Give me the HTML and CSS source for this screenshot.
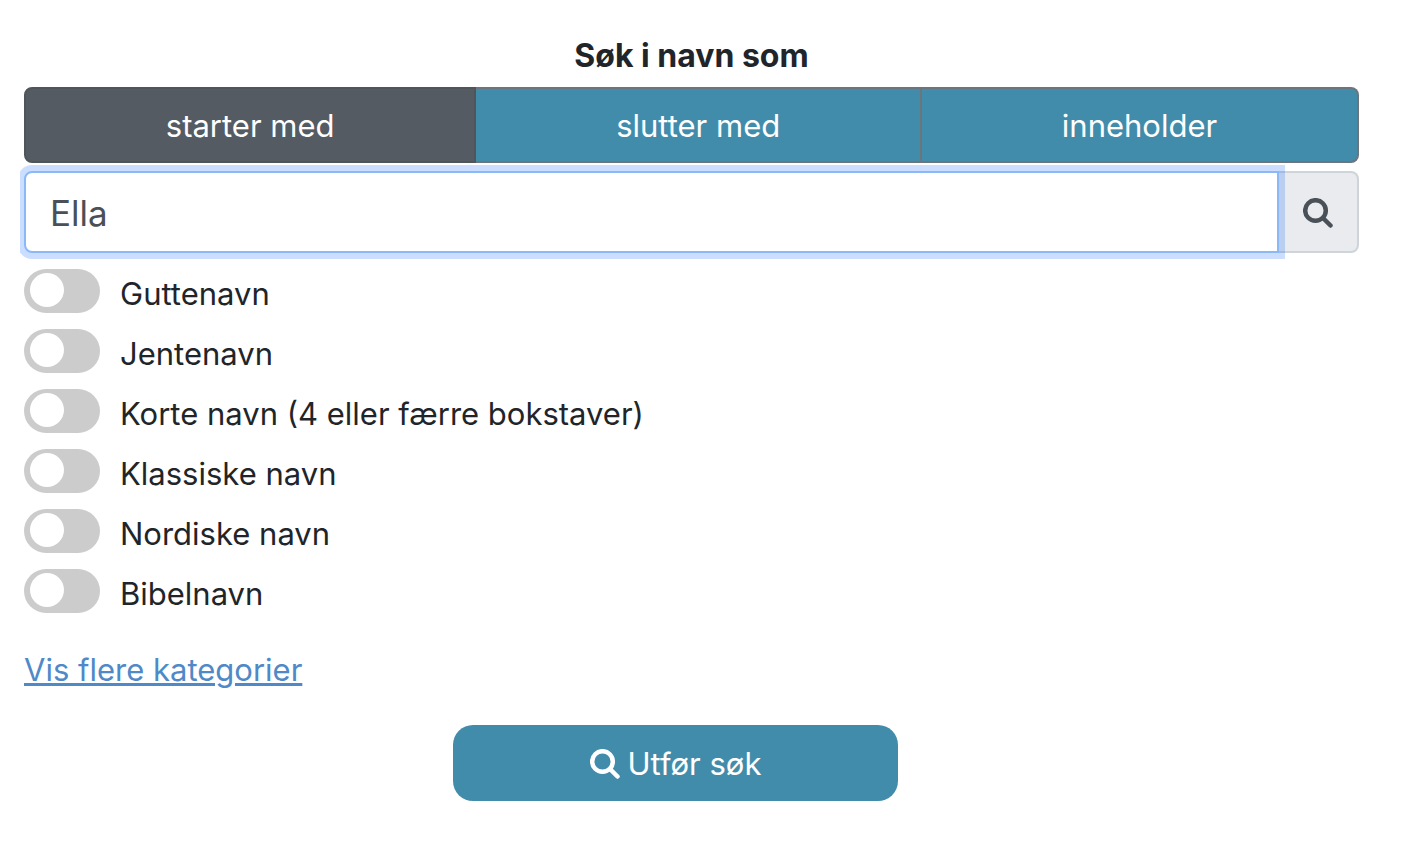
FILE: index.html
```
<!DOCTYPE html>
<html lang="no">
<head>
    <meta charset="UTF-8">
    <meta name="viewport" content="width=device-width, initial-scale=1.0">
    <title>Søk i navn</title>
    <link rel="stylesheet" href="styles.css">
</head>
<body>
    <form class="search-form">
        <label class="title" for="query">Søk i navn som</label>
        <div class="btn-group">
            <button type="button" class="active">starter med</button>
            <button type="button">slutter med</button>
            <button type="button">inneholder</button>
        </div>
        <div class="input-group">
            <input type="text" id="query" class="focused" value="Ella">
            <span class="addon">
                <svg class="icon" viewBox="0 0 30 30" aria-hidden="true">
                    <circle cx="12.5" cy="12.5" r="10.3"/>
                    <path d="M20.5 20.5L27.5 27.5"/>
                </svg>
            </span>
        </div>
        <div class="filters">
            <label><input type="checkbox" class="switch"><span>Guttenavn</span></label>
            <label><input type="checkbox" class="switch"><span>Jentenavn</span></label>
            <label><input type="checkbox" class="switch"><span>Korte navn (4 eller færre bokstaver)</span></label>
            <label><input type="checkbox" class="switch"><span>Klassiske navn</span></label>
            <label><input type="checkbox" class="switch"><span>Nordiske navn</span></label>
            <label><input type="checkbox" class="switch"><span>Bibelnavn</span></label>
        </div>
        <a class="more" href="#">Vis flere kategorier</a>
        <div class="actions">
            <button type="submit" class="submit">
                <svg class="icon" viewBox="0 0 30 30" aria-hidden="true">
                    <circle cx="12.5" cy="12.5" r="10.3"/>
                    <path d="M20.5 20.5L27.5 27.5"/>
                </svg>
                <span>Utfør søk</span>
            </button>
        </div>
    </form>
</body>
</html>
```
FILE: styles.css
```
* {
    box-sizing: border-box;
}
body {
    margin: 0;
    font-family: Inter, "Liberation Sans", sans-serif;
    font-size: 31px;
    line-height: 48px;
    color: #212529;
    background-color: #fff;
}
button, input {
    font: inherit;
}
.search-form {
    margin: 32px 39px 32px 20px;
    padding: 0 4px;
    overflow: hidden;
}
.title {
    display: block;
    margin-bottom: 7px;
    text-align: center;
    font-size: 32px;
    font-weight: bold;
}
.btn-group {
    display: flex;
}
.btn-group button {
    flex: 1 1 auto;
    height: 76px;
    padding: 2px 24px 0;
    border: 2px solid #6c757d;
    background-color: #428cab;
    color: #fff;
    cursor: pointer;
}
.btn-group button + button {
    border-left: none;
}
.btn-group button:first-child {
    border-radius: 8px 0 0 8px;
}
.btn-group button:last-child {
    border-radius: 0 8px 8px 0;
}
.btn-group .active {
    background-color: #545b62;
    border-color: #4e555b;
}
.input-group {
    display: flex;
    height: 82px;
    margin: 8px 0 16px;
}
.input-group input {
    flex: 1;
    min-width: 0;
    padding: 2px 24px 0;
    border: 2px solid #ced4da;
    border-radius: 8px 0 0 8px;
    background-color: #fff;
    font-size: 35px;
    color: #495057;
    outline: none;
}
.input-group .focused {
    position: relative;
    z-index: 1;
    border-color: #8bb9f8;
    box-shadow: 0 0 0 6px rgba(0, 90, 255, 0.2);
}
.addon {
    display: flex;
    align-items: center;
    justify-content: center;
    width: 80px;
    padding-top: 2px;
    border: 2px solid #ced4da;
    border-left: none;
    border-radius: 0 8px 8px 0;
    background-color: #e9ebef;
    color: #495057;
}
.icon {
    width: 30px;
    height: 30px;
    fill: none;
    stroke: currentColor;
    stroke-width: 4.5;
    stroke-linecap: round;
}
.filters {
    display: grid;
    justify-items: start;
    gap: 16px;
}
.filters label {
    display: flex;
    gap: 20px;
    height: 44px;
    line-height: 50px;
    cursor: pointer;
}
.switch {
    appearance: none;
    width: 76px;
    height: 44px;
    margin: 0;
    padding: 4px 6px;
    border-radius: 22px;
    background-color: #ccc;
    cursor: pointer;
}
.switch::before {
    content: "";
    display: block;
    width: 34px;
    height: 34px;
    border-radius: 50%;
    background-color: #fff;
}
.switch:checked {
    background-color: #428cab;
}
.switch:checked::before {
    margin-left: 30px;
}
.more {
    display: inline-block;
    margin-top: 33px;
    color: #4f89c7;
    text-decoration-thickness: 3px;
}
.actions {
    display: flex;
    justify-content: center;
    margin: 31px 16px 0 -16px;
}
.submit {
    display: flex;
    align-items: center;
    justify-content: center;
    gap: 8px;
    width: calc(100% / 3);
    height: 76px;
    padding: 2px 24px 0;
    border: none;
    border-radius: 20px;
    background-color: #428cab;
    color: #fff;
    cursor: pointer;
}
```
